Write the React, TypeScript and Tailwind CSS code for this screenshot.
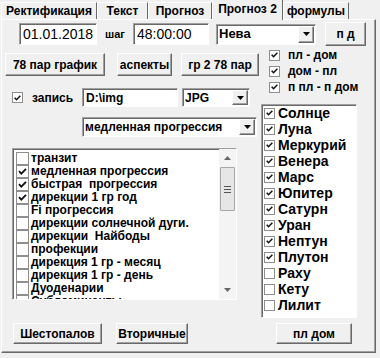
import React from 'react';

const raised =
  'border border-t-white border-l-white border-r-[#696969] border-b-[#696969] shadow-[inset_-1px_-1px_0_#a0a0a0]';
const sunken =
  'border border-t-[#a0a0a0] border-l-[#a0a0a0] border-r-white border-b-white shadow-[inset_1px_1px_0_#696969]';

const Tick: React.FC<{ size: number }> = ({ size }) => (
  <svg width={size} height={size} viewBox="0 0 11 11" className="block">
    <path d="M2 5.2 L4.3 7.6 L9 2.8" fill="none" stroke="#111" strokeWidth="1.8" />
  </svg>
);

const Box: React.FC<{ checked?: boolean; className: string; size: number }> = ({ checked, className, size }) => (
  <span className={`flex shrink-0 items-center justify-center bg-white border border-[#8e8e8e] ${className}`}>
    {checked && <Tick size={size} />}
  </span>
);

const Btn: React.FC<{ label: string; className: string }> = ({ label, className }) => (
  <div className={`flex items-center justify-center bg-[#f0f0f0] text-[12px] font-bold text-black ${raised} ${className}`}>
    {label}
  </div>
);

const Arrow = () => (
  <svg width="7" height="4" viewBox="0 0 7 4" className="block">
    <path d="M0 0 H7 L3.5 4 Z" fill="#000" />
  </svg>
);

const Combo: React.FC<{ value: string; className: string; text: string }> = ({ value, className, text }) => (
  <div className={`flex bg-white ${sunken} ${className}`}>
    <div className={`flex-1 pl-[2px] flex items-center font-bold text-black ${text}`}>{value}</div>
    <div className={`w-[16px] my-[1px] mr-[1px] flex items-center justify-center bg-[#f0f0f0] ${raised}`}>
      <Arrow />
    </div>
  </div>
);

const Tab: React.FC<{ label: string; className: string; active?: boolean }> = ({ label, className, active }) => (
  <div
    className={`flex items-center justify-center bg-[#f0f0f0] text-[12px] font-bold text-black border-t border-l border-t-white border-l-white border-r border-r-[#696969] ${
      active ? 'h-[21px] -mb-px relative z-10 pb-[2px]' : 'h-[17px]'
    } ${className}`}
  >
    {label}
  </div>
);

const progressions = [
  { label: 'транзит', on: false },
  { label: 'медленная прогрессия', on: true },
  { label: 'быстрая  прогрессия', on: true },
  { label: 'дирекции 1 гр год', on: true },
  { label: 'Fi прогрессия', on: false },
  { label: 'дирекции солнечной дуги.', on: false },
  { label: 'дирекции  Найбоды', on: false },
  { label: 'профекции', on: false },
  { label: 'дирекция 1 гр - месяц', on: false },
  { label: 'дирекция 1 гр - день', on: false },
  { label: 'Дуоденарии', on: false },
  { label: 'Субдоминанты', on: false },
];

const planets = [
  { label: 'Солнце', on: true },
  { label: 'Луна', on: true },
  { label: 'Меркурий', on: true },
  { label: 'Венера', on: true },
  { label: 'Марс', on: true },
  { label: 'Юпитер', on: true },
  { label: 'Сатурн', on: true },
  { label: 'Уран', on: true },
  { label: 'Нептун', on: true },
  { label: 'Плутон', on: true },
  { label: 'Раху', on: false },
  { label: 'Кету', on: false },
  { label: 'Лилит', on: false },
];

const App: React.FC = () => {
  return (
    <div className="w-[380px] h-[358px] overflow-hidden bg-[#f0f0f0] font-['Liberation_Sans',Arial,sans-serif] text-black">
      {/* Tabs */}
      <div className="flex items-end h-[19px] pl-[1px]">
        <Tab label="Ректификация" className="w-[96px]" />
        <Tab label="Текст" className="w-[51px]" />
        <Tab label="Прогноз" className="w-[64px]" />
        <Tab label="Прогноз 2" className="w-[71px]" active />
        <Tab label="формулы" className="w-[66px]" />
      </div>

      {/* Panel */}
      <div className={`ml-[1px] w-[375px] h-[334px] ${raised}`}>
        {/* Row 1 */}
        <div className="flex items-center h-[24px] mt-[2px]">
          <div className={`ml-[17px] w-[78px] h-[22px] bg-white flex items-center pl-[3px] text-[14px] ${sunken}`}>
            01.01.2018
          </div>
          <div className="w-[36px] pl-[8px] text-[11px] font-bold">шаг</div>
          <div className={`w-[76px] h-[22px] bg-white flex items-center pl-[3px] text-[14px] ${sunken}`}>
            48:00:00
          </div>
          <Combo value="Нева" className="ml-[7px] w-[100px] h-[21px]" text="text-[13px]" />
          <Btn label="п д" className="ml-[9px] w-[41px] h-[24px]" />
        </div>

        {/* Body */}
        <div className="grid grid-cols-[259px_1fr]">
          <div className="flex flex-col">
            <div className="flex mt-[7px] h-[23px]">
              <Btn label="78 пар график" className="ml-[3px] w-[100px]" />
              <Btn label="аспекты" className="ml-[12px] w-[55px]" />
              <Btn label="гр 2 78 пар" className="ml-[9px] w-[78px]" />
            </div>

            <div className="flex items-center mt-[12px] h-[19px]">
              <Box checked className="ml-[10px] w-[11px] h-[11px]" size={10} />
              <span className="ml-[9px] w-[50px] text-[12px] font-bold">запись</span>
              <div className={`w-[96px] h-[19px] bg-white flex items-center pl-[3px] text-[12px] font-bold ${sunken}`}>
                D:\img
              </div>
              <Combo value="JPG" className="ml-[4px] w-[68px] h-[19px]" text="text-[12px]" />
            </div>

            <Combo value="медленная прогрессия" className="mt-[10px] ml-[80px] w-[175px] h-[20px]" text="text-[12px]" />

            <div className={`mt-[11px] ml-[10px] w-[225px] h-[152px] bg-white flex overflow-hidden ${sunken}`}>
              <div className="flex-1 flex flex-col overflow-hidden pt-[3px]">
                {progressions.map((p) => (
                  <div key={p.label} className="flex items-center h-[13px] shrink-0 pl-[3px]">
                    <Box checked={p.on} className="w-[13px] h-[13px] -my-px" size={11} />
                    <span className="ml-[2px] text-[12px] font-bold leading-[13px] whitespace-pre">{p.label}</span>
                  </div>
                ))}
              </div>
              <div className="w-[17px] flex flex-col items-center bg-[#f4f4f4]">
                <svg width="7" height="4" viewBox="0 0 7 4" className="mt-[7px]">
                  <path d="M0 4 H7 L3.5 0 Z" fill="#666" />
                </svg>
                <div className="mt-[7px] w-[15px] h-[44px] bg-[#e6e6e6] border border-[#a8a8a8] rounded-[1px] flex flex-col items-center justify-center gap-[2px]">
                  <div className="w-[7px] h-px bg-[#555]" />
                  <div className="w-[7px] h-px bg-[#555]" />
                  <div className="w-[7px] h-px bg-[#555]" />
                </div>
                <div className="flex-1" />
                <svg width="7" height="4" viewBox="0 0 7 4" className="mb-[7px]">
                  <path d="M0 0 H7 L3.5 4 Z" fill="#666" />
                </svg>
              </div>
            </div>
          </div>

          <div className="flex flex-col">
            <div className="flex flex-col mt-[1px]">
              {['пл - дом', 'дом - пл', 'п пл - п дом'].map((l) => (
                <div key={l} className="flex items-center h-[16px] pl-[8px]">
                  <Box checked className="w-[11px] h-[11px]" size={10} />
                  <span className="ml-[8px] text-[12px] font-bold">{l}</span>
                </div>
              ))}
            </div>
            <div className={`mt-[9px] w-[96px] h-[214px] bg-white flex flex-col pt-0 ${sunken}`}>
              {planets.map((p) => (
                <div key={p.label} className="flex items-center h-[16px] shrink-0 pl-[2px]">
                  <Box checked={p.on} className="w-[11px] h-[11px]" size={10} />
                  <span className="ml-[3px] text-[14px] font-bold leading-[16px]">{p.label}</span>
                </div>
              ))}
            </div>
          </div>
        </div>

        {/* Bottom buttons */}
        <div className="flex mt-[5px] h-[21px]">
          <Btn label="Шестопалов" className="ml-[11px] w-[89px]" />
          <Btn label="Вторичные" className="ml-[14px] w-[72px]" />
          <Btn label="пл дом" className="ml-[88px] w-[76px]" />
        </div>
      </div>
    </div>
  );
};

export default App;
